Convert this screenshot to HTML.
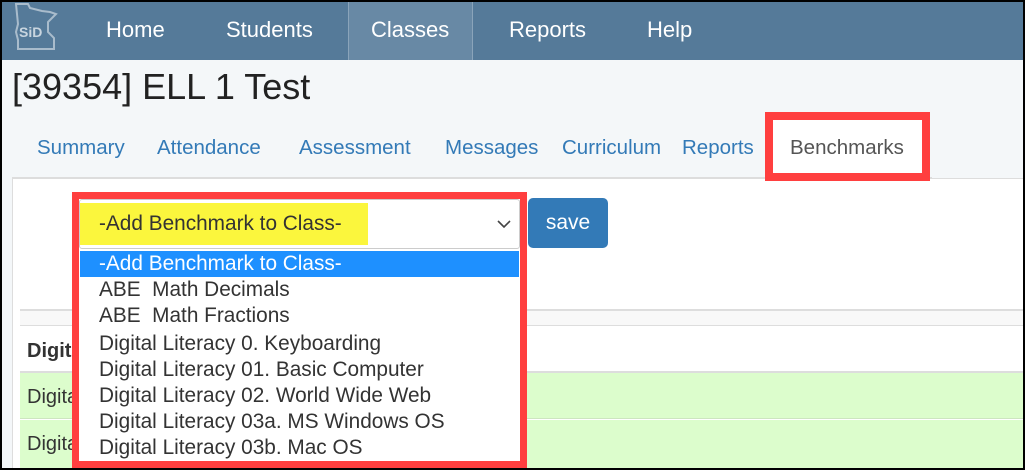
<!DOCTYPE html>
<html><head><style>
*{margin:0;padding:0;box-sizing:border-box}
body{width:1025px;height:470px;overflow:hidden;background:#000;font-family:"Liberation Sans",Arial,sans-serif;position:relative}
#pg{position:absolute;left:2px;top:2px;width:1021px;height:466px;background:#f4f7f9;overflow:hidden}
.nav{position:absolute;left:0;top:0;width:1021px;height:58px;background:#557a99}
.nav span{position:absolute;top:15px;color:#fff;font-size:22px}
.act{position:absolute;left:346px;top:0;width:125px;height:58px;background:#6889a5;border-left:1px solid #8aa4ba;border-right:1px solid #8aa4ba}
h1{position:absolute;left:10px;top:64px;font-size:36px;font-weight:normal;color:#222}
.tab{position:absolute;top:134px;font-size:20.5px;color:#337ab7}
.content{position:absolute;left:10px;top:176px;width:1011px;height:300px;background:#fff;border-left:1px solid #ddd;border-top:1px solid #ddd}
.abs{position:absolute}
.opt{position:absolute;left:20px;font-size:20.8px;color:#333;white-space:nowrap}
</style></head><body><div id="pg">
<div class="nav">
<div class="act"></div>
<svg class="abs" style="left:8px;top:0" width="50" height="52" viewBox="0 0 50 52"><path d="M6 2 L18 2 L20 6 L32 9 L40 10 L46 12 L38 20 L38 30 L44 36 L44 47 L8 47 L8 38 L6 30 L8 22 Z" fill="none" stroke="#a9bccc" stroke-width="2"/><text x="9" y="35" font-size="14" font-weight="bold" fill="#c9d5df" font-family="Liberation Sans">SiD</text></svg>
<span style="left:104px">Home</span><span style="left:224px">Students</span><span style="left:369px">Classes</span><span style="left:507px">Reports</span><span style="left:645px">Help</span>
</div>
<h1>[39354] ELL 1 Test</h1>
<div class="abs" style="left:10px;top:175px;width:920px;height:1px;background:#ddd"></div>
<span class="tab" style="left:35px">Summary</span>
<span class="tab" style="left:155px">Attendance</span>
<span class="tab" style="left:297px">Assessment</span>
<span class="tab" style="left:443px">Messages</span>
<span class="tab" style="left:560px">Curriculum</span>
<span class="tab" style="left:680px">Reports</span>
<div class="content"></div>
<div class="abs" style="left:763px;top:110px;width:165px;height:69px;background:#fff;border:8px solid #ff3f3f"></div>
<span class="tab" style="left:788px;color:#555">Benchmarks</span>
<div class="abs" style="left:18px;top:307px;width:1003px;height:17px;background:#f8f8f8;border-top:2px solid #ddd;border-bottom:1px solid #ddd"></div>
<div class="abs" style="left:18px;top:369px;width:1003px;height:2px;background:#ddd"></div>
<div class="abs" style="left:18px;top:371px;width:1003px;height:46px;background:#dcfdcc;border-bottom:1px solid #cde5c0"></div>
<div class="abs" style="left:18px;top:418px;width:1003px;height:50px;background:#dcfdcc"></div>
<span class="abs" style="left:25px;top:338px;font-size:20px;font-weight:bold;color:#333">Digital</span>
<span class="abs" style="left:25px;top:384px;font-size:20px;color:#333">Digital</span>
<span class="abs" style="left:25px;top:431px;font-size:20px;color:#333">Digital</span>
<div class="abs" style="left:526px;top:196px;width:80px;height:50px;background:#337ab7;border-radius:5px;color:#fff;font-size:21px;text-align:center;line-height:50px">save</div>
<div class="abs" style="left:70px;top:190px;width:455px;height:276px;border:7px solid #ff3f3f;background:#fff">
 <div class="abs" style="left:0;top:0;width:441px;height:50px;background:#fff;border:1px solid #ccc;border-radius:3px"></div>
 <div class="abs" style="left:1px;top:4px;width:288px;height:42px;background:#fbf63d"></div>
 <span class="opt" style="top:13px">-Add Benchmark to Class-</span>
 <svg class="abs" style="left:418px;top:20px" width="14" height="10"><path d="M1 2 L7 8 L13 2" fill="none" stroke="#444" stroke-width="1.6"/></svg>
 <div class="abs" style="left:1px;top:52px;width:439px;height:26px;background:#1e90ff"></div>
 <span class="opt" style="top:53px;color:#fff">-Add Benchmark to Class-</span>
 <span class="opt" style="top:79px">ABE&nbsp; Math Decimals</span>
 <span class="opt" style="top:105px">ABE&nbsp; Math Fractions</span>
 <span class="opt" style="top:133px">Digital Literacy 0. Keyboarding</span>
 <span class="opt" style="top:159px">Digital Literacy 01. Basic Computer</span>
 <span class="opt" style="top:185px">Digital Literacy 02. World Wide Web</span>
 <span class="opt" style="top:211px">Digital Literacy 03a. MS Windows OS</span>
 <span class="opt" style="top:237px">Digital Literacy 03b. Mac OS</span>
</div>
</div></body></html>
